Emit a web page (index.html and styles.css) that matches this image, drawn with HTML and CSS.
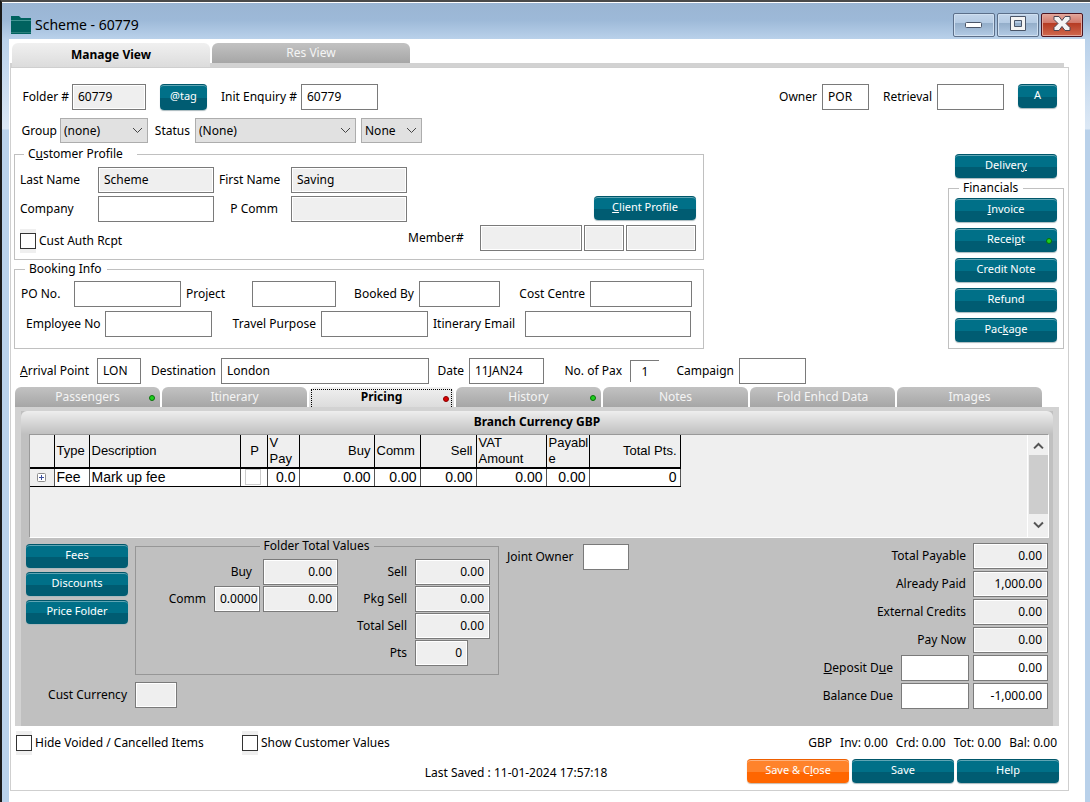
FILE: index.html
```html
<!DOCTYPE html>
<html lang="en">
<head>
    <meta charset="UTF-8">
    <meta name="viewport" content="width=device-width, initial-scale=1.0">
    <title>Scheme - 60779</title>
    <link rel="stylesheet" href="styles.css">
</head>
<body>

<div class="window">
    <header class="titlebar">
        <svg class="folder-icon" width="20" height="18" viewBox="0 0 20 18">
            <path d="M0 0h8l2 2h10v16H0z" fill="#00625f"/>
            <path d="M0 4.500h20" stroke="#3d9490" stroke-width="1"/>
            <path d="M0 16.500h20" stroke="#2b807c" stroke-width="1"/>
        </svg>
        <h1>Scheme - 60779</h1>
        <div class="window-buttons">
            <button type="button" class="win-btn" aria-label="Minimize">
                <svg width="18" height="18" viewBox="0 0 18 18"><rect x=".5" y="7.500" width="16" height="5" rx="1" fill="#fff" stroke="#4a5568"/></svg>
            </button>
            <button type="button" class="win-btn" aria-label="Maximize">
                <svg width="18" height="18" viewBox="0 0 18 18"><path d="M1.500 1.500h15v14h-15z M5.500 5.500v6h7v-6z" fill="#f4f4f4" fill-rule="evenodd" stroke="#4a5568"/></svg>
            </button>
            <button type="button" class="win-btn win-close" aria-label="Close">
                <svg width="18" height="18" viewBox="0 0 18 18"><path d="M1 1.500h5l3 4 3-4h5v3l-4 4 4 4v3h-5l-3-4-3 4H1v-3l4-4-4-4z" fill="#f4f4f4" stroke="#4b4552"/></svg>
            </button>
        </div>
    </header>

    <main class="client">
        <nav class="view-tabs">
            <button type="button" class="tab tab-active">Manage View</button>
            <button type="button" class="tab">Res View</button>
        </nav>

        <div class="panel">
            <div class="row top-row">
                <div class="field f-folder"><label for="folder">Folder #</label><input type="text" id="folder" value="60779" readonly></div>
                <button type="button" class="btn btn-tag">@tag</button>
                <div class="field f-enquiry"><label for="enquiry">Init Enquiry #</label><input type="text" id="enquiry" value="60779"></div>
                <div class="field f-owner"><label for="owner">Owner</label><input type="text" id="owner" value="POR"></div>
                <div class="field f-retrieval"><label for="retrieval">Retrieval</label><input type="text" id="retrieval"></div>
                <button type="button" class="btn btn-a">A</button>
            </div>

            <div class="row status-row">
                <div class="field f-group">
                    <label for="group">Group</label>
                    <span class="select"><select id="group"><option>(none)</option></select><svg width="11" height="7" viewBox="0 0 11 7"><path d="M1 1l4.500 4.500L10 1"/></svg></span>
                </div>
                <div class="field f-status">
                    <label for="status">Status</label>
                    <span class="select"><select id="status"><option>(None)</option></select><svg width="11" height="7" viewBox="0 0 11 7"><path d="M1 1l4.500 4.500L10 1"/></svg></span>
                    <span class="select"><select aria-label="Sub status"><option>None</option></select><svg width="11" height="7" viewBox="0 0 11 7"><path d="M1 1l4.500 4.500L10 1"/></svg></span>
                </div>
            </div>

            <div class="upper">
                <div class="details">
                    <fieldset class="profile">
                        <legend class="wide">C<u>u</u>stomer Profile</legend>
                        <div class="row">
                            <div class="field f-last"><label class="left" for="last">Last Name</label><input type="text" id="last" value="Scheme" readonly></div>
                            <div class="field f-first"><label class="left lead" for="first">First Name</label><input type="text" id="first" value="Saving" readonly></div>
                        </div>
                        <div class="row">
                            <div class="field f-last"><label class="left" for="company">Company</label><input type="text" id="company"></div>
                            <div class="field f-first"><label class="indent" for="pcomm">P Comm</label><input type="text" id="pcomm" readonly></div>
                            <button type="button" class="btn push"><u>C</u>lient Profile</button>
                        </div>
                        <div class="row">
                            <label class="check"><input type="checkbox">Cust Auth Rcpt</label>
                            <div class="field f-member push">
                                <label class="left" for="member">Member#</label>
                                <input type="text" id="member" readonly>
                                <input type="text" aria-label="Member code" readonly>
                                <input type="text" aria-label="Member type" readonly>
                            </div>
                        </div>
                    </fieldset>

                    <fieldset class="booking">
                        <legend>Booking Info</legend>
                        <div class="row">
                            <div class="field f-po"><label class="left" for="po">PO No.</label><input type="text" id="po"></div>
                            <div class="field f-project"><label class="left lead" for="project">Project</label><input type="text" id="project"></div>
                            <div class="field f-booked"><label for="booked">Booked By</label><input type="text" id="booked"></div>
                            <div class="field f-cost"><label for="cost">Cost Centre</label><input type="text" id="cost"></div>
                        </div>
                        <div class="row">
                            <div class="field f-employee"><label class="left lead" for="employee">Employee No</label><input type="text" id="employee"></div>
                            <div class="field f-travel"><label for="travel">Travel Purpose</label><input type="text" id="travel"></div>
                            <div class="field f-email"><label class="left lead" for="email">Itinerary Email</label><input type="text" id="email"></div>
                        </div>
                    </fieldset>
                </div>

                <aside class="side">
                    <button type="button" class="btn">Deliver<u>y</u></button>
                    <fieldset class="financials">
                        <legend>Financials</legend>
                        <button type="button" class="btn"><u>I</u>nvoice</button>
                        <button type="button" class="btn">Recei<u>p</u>t<i class="dot green"></i></button>
                        <button type="button" class="btn">Credit Note</button>
                        <button type="button" class="btn">Refund</button>
                        <button type="button" class="btn">Pac<u>k</u>age</button>
                    </fieldset>
                </aside>
            </div>

            <div class="row trip">
                <div class="field f-arrival"><label class="left" for="arrival"><u>A</u>rrival Point</label><input type="text" id="arrival" value="LON"></div>
                <div class="field f-dest"><label for="dest">Destination</label><input type="text" id="dest" value="London"></div>
                <div class="field f-date"><label for="date">Date</label><input type="text" id="date" value="11JAN24"></div>
                <div class="field f-pax"><label for="pax">No. of Pax</label><input type="text" id="pax" class="pax" value="1"></div>
                <div class="field f-campaign"><label for="campaign">Campaign</label><input type="text" id="campaign"></div>
            </div>

            <nav class="folder-tabs">
                <button type="button" class="tab">Passengers<i class="dot green"></i></button>
                <button type="button" class="tab">Itinerary</button>
                <button type="button" class="tab tab-active focused">Pricing<i class="dot red"></i></button>
                <button type="button" class="tab">History<i class="dot green"></i></button>
                <button type="button" class="tab">Notes</button>
                <button type="button" class="tab">Fold Enhcd Data</button>
                <button type="button" class="tab">Images</button>
            </nav>

            <section class="pricing">
                <div class="pricing-body">
                    <h2>Branch Currency GBP</h2>

                    <div class="grid-box">
                        <div class="grid-area">
                            <table class="grid">
                                <colgroup>
                                    <col class="c-exp"><col class="c-type"><col class="c-desc"><col class="c-p"><col class="c-vpay"><col class="c-buy">
                                    <col class="c-comm"><col class="c-sell"><col class="c-vat"><col class="c-payable"><col class="c-total">
                                </colgroup>
                                <thead>
                                    <tr><th></th><th>Type</th><th>Description</th><th class="mid">P</th><th>V Pay</th><th class="num">Buy</th><th>Comm</th><th class="num">Sell</th><th>VAT Amount</th><th>Payable</th><th class="num">Total Pts.</th></tr>
                                </thead>
                                <tbody>
                                    <tr>
                                        <td class="expander"><button type="button" aria-label="Expand"><svg width="9" height="9" viewBox="0 0 9 9"><rect x=".5" y=".5" width="8" height="8" rx="1" fill="#fff" stroke="#8c8c8c"/><path d="M2 4.500h5M4.500 2v5" stroke="#3c4f9c"/></svg></button></td>
                                        <td>Fee</td><td>Mark up fee</td>
                                        <td class="mid"><input type="checkbox" aria-label="P"></td>
                                        <td class="num">0.0</td><td class="num">0.00</td><td class="num">0.00</td><td class="num">0.00</td><td class="num">0.00</td><td class="num">0.00</td><td class="num">0</td>
                                    </tr>
                                </tbody>
                            </table>
                        </div>
                        <div class="scrollbar">
                            <svg width="11" height="8" viewBox="0 0 11 8"><path d="M1 6.500L5.500 2 10 6.500"/></svg>
                            <div class="thumb"></div>
                            <svg width="11" height="8" viewBox="0 0 11 8"><path d="M1 1.500L5.500 6 10 1.500"/></svg>
                        </div>
                    </div>

                    <div class="values">
                        <div class="values-left">
                            <div class="values-top">
                                <div class="actions">
                                    <button type="button" class="btn">Fees</button>
                                    <button type="button" class="btn">Discounts</button>
                                    <button type="button" class="btn">Price Folder</button>
                                </div>
                                <fieldset class="totals">
                                    <legend>Folder Total Values</legend>
                                    <div class="totals-buy">
                                        <label class="span" for="buy">Buy</label><input type="text" id="buy" value="0.00" readonly>
                                        <label for="comm">Comm</label><input type="text" id="comm" class="rate" value="0.0000" readonly><input type="text" aria-label="Comm value" value="0.00" readonly>
                                    </div>
                                    <div class="totals-sell">
                                        <label for="sell">Sell</label><input type="text" id="sell" value="0.00" readonly>
                                        <label for="pkg">Pkg Sell</label><input type="text" id="pkg" value="0.00" readonly>
                                        <label for="total-sell">Total Sell</label><input type="text" id="total-sell" value="0.00" readonly>
                                        <label for="pts">Pts</label><input type="text" id="pts" class="pts" value="0" readonly>
                                    </div>
                                </fieldset>
                            </div>
                            <div class="field f-currency"><label for="currency">Cust Currency</label><input type="text" id="currency" readonly></div>
                        </div>

                        <div class="field f-joint"><label class="left" for="joint">Joint Owner</label><input type="text" id="joint"></div>

                        <div class="payments">
                            <label class="span" for="payable">Total Payable</label><input type="text" id="payable" value="0.00" readonly>
                            <label class="span" for="paid">Already Paid</label><input type="text" id="paid" value="1,000.00" readonly>
                            <label class="span" for="credits">External Credits</label><input type="text" id="credits" value="0.00" readonly>
                            <label class="span" for="paynow">Pay Now</label><input type="text" id="paynow" value="0.00" readonly>
                            <label for="deposit"><u>D</u>eposit D<u>u</u>e</label><input type="text" id="deposit"><input type="text" aria-label="Deposit amount" value="0.00">
                            <label for="balance">Balance Due</label><input type="text" id="balance"><input type="text" aria-label="Balance amount" value="-1,000.00">
                        </div>
                    </div>
                </div>
            </section>

            <div class="options">
                <label class="check hide-voided"><input type="checkbox">Hide Voided / Cancelled Items</label>
                <label class="check"><input type="checkbox">Show Customer Values</label>
                <div class="summary"><span>GBP</span><span>Inv: 0.00</span><span>Crd: 0.00</span><span>Tot: 0.00</span><span>Bal: 0.00</span></div>
            </div>

            <footer class="footer">
                <p>Last Saved : 11-01-2024 17:57:18</p>
                <button type="button" class="btn btn-orange">Save &amp; C<u>l</u>ose</button>
                <button type="button" class="btn">Save</button>
                <button type="button" class="btn">Help</button>
            </footer>
        </div>
    </main>
</div>

</body>
</html>
```
FILE: styles.css
```css
* {
    box-sizing: border-box;
}

body {
    margin: 0;
    font-family: "Noto Sans", "Open Sans", sans-serif;
    font-size: 12px;
    line-height: 16px;
    color: #000;
    background: #fff;
}

button, input, select {
    font-family: inherit;
    font-size: inherit;
    line-height: inherit;
    color: inherit;
    margin: 0;
}

/* Window frame */
.window {
    display: flex;
    flex-direction: column;
    min-height: 100vh;
    padding: 0 5px 0 7px;
    border-top: 2px solid #4a4a4a;
    border-left: 2px solid #1a1a1a;
    background: linear-gradient(#fff 0, #fff 1px, #9ab5d3 1px, #9db9d8 18px, #b9d1ea 37px, #dce8f5 127px, #b9d1ea 128px);
}

.titlebar {
    display: flex;
    align-items: center;
    height: 37px;
    padding: 8px 2px 0;
}

.titlebar h1 {
    margin: 0 auto 0 4px;
    font-size: 14px;
    font-weight: normal;
    line-height: 20px;
}

.window-buttons {
    display: flex;
    gap: 2px;
}

.win-btn {
    display: flex;
    align-items: center;
    justify-content: center;
    width: 42px;
    height: 24px;
    padding: 0 0 2px;
    border: 1px solid #5c6f8a;
    border-radius: 2px;
    background: linear-gradient(#c3d5ea 0, #b4cae3 40%, #93adc9 41%, #b3cbe5 100%);
    box-shadow: inset 0 0 0 1px #cfdff0;
}

.win-close {
    border-color: #4d1420;
    background: linear-gradient(#e3a69b 0, #d2796b 40%, #b53a22 41%, #d0694f 100%);
    box-shadow: inset 0 0 0 1px #e2a79c;
}

.client {
    flex: 1;
    padding: 4px 16px 10px 1px;
    background: #fff;
}

/* Tabs */
.tab {
    position: relative;
    height: 20px;
    padding: 0;
    border: 0;
    border-radius: 6px 6px 0 0;
    color: #f4f4f4;
    background: linear-gradient(#c2c2c2, #a6a6a6);
}

.tab-active {
    color: #000;
    font-weight: bold;
    background: linear-gradient(#f0f0f0, #dcdcdc);
}

.view-tabs {
    display: flex;
    gap: 2px;
    margin-right: 5px;
    padding-left: 2px;
    border-bottom: 4px solid #d2d2d2;
}

.view-tabs .tab {
    flex: 0 1 198px;
}

.view-tabs .tab-active {
    height: 24px;
    margin-bottom: -4px;
}

.folder-tabs {
    display: flex;
    gap: 2px;
    margin: 3px 19px 0 1px;
}

.folder-tabs .tab {
    flex: 0 1 145px;
}

.focused::before {
    content: "";
    position: absolute;
    inset: 2px 2px 0;
    border: 1px dotted #000;
    border-bottom: 0;
}

.dot {
    position: absolute;
    right: 5px;
    top: 8px;
    width: 6px;
    height: 6px;
    border: 1px solid #087008;
    border-radius: 50%;
    background: #1fd01f;
}

.dot.red {
    top: 9px;
    border-color: #8a0000;
    background: #d80000;
}

/* Form pieces */
.panel {
    padding: 16px 4px 7px 3px;
    border: 1px solid #cfcfcf;
}

.row {
    display: flex;
    align-items: center;
}

.push {
    margin-left: auto;
}

.field {
    display: grid;
    align-items: center;
}

label {
    white-space: nowrap;
}

.field label,
.totals label,
.payments label {
    padding-right: 5px;
    text-align: right;
}

.field .left {
    padding-right: 0;
    text-align: left;
}

.field .lead {
    padding-left: 5px;
}

.field .indent {
    padding-right: 13px;
}

input[type="text"] {
    min-width: 0;
    width: 100%;
    height: 26px;
    padding: 0 5px 2px;
    border: 1px solid #7a7a7a;
    background: #fff;
}

input[readonly] {
    background: #efefef;
    box-shadow: inset 0 0 0 1px #fff;
}

.select {
    position: relative;
    display: block;
}

.select select {
    appearance: none;
    width: 100%;
    height: 25px;
    padding: 0 20px 0 3px;
    border: 1px solid #adadad;
    border-radius: 0;
    background: #e1e1e1;
}

.select svg {
    position: absolute;
    right: 5px;
    top: 9px;
    fill: none;
    stroke: #444;
    pointer-events: none;
}

.check {
    display: flex;
    align-items: center;
    gap: 3px;
}

.check input {
    appearance: none;
    width: 16px;
    height: 16px;
    border: 1px solid #333;
    background: #fff;
    box-shadow: 0 -4px #efefef, 0 4px #efefef;
}

.btn {
    position: relative;
    width: 102px;
    height: 24px;
    padding: 0 0 4px;
    border: 0;
    border-top: 1px solid #00566a;
    border-radius: 4px;
    color: #fff;
    font-size: 11px;
    background: linear-gradient(#007088 0, #007088 50%, #005c72 51%, #005c72 100%);
    box-shadow: inset 0 1px #5fa5b4, 0 1px 1px #a9b9bd;
}

.btn .dot {
    top: 9px;
}

.btn-orange {
    border-top-color: #ee5f00;
    background: linear-gradient(#ff832b 0, #ff832b 50%, #ff6600 51%, #ff6600 100%);
    box-shadow: inset 0 1px #ffb27c, 0 1px 1px #c9b9a9;
}

.btn-tag {
    width: 47px;
    height: 26px;
}

.btn-a {
    width: 39px;
    align-self: flex-start;
}

fieldset {
    min-width: 0;
    margin: 0;
    padding: 0;
    border: 1px solid #c0c0c0;
}

legend {
    margin-left: 4px;
    padding: 0 5px 0 4px;
    height: 16px;
}

legend.wide {
    padding-right: 14px;
}

/* Folder header rows */
.top-row {
    gap: 14px;
    padding: 0 7px;
}

.top-row .f-owner {
    margin-left: auto;
}

.status-row {
    gap: 5px;
    margin-top: 8px;
    padding-left: 6px;
}

.f-folder { grid-template-columns: 51px 74px; }
.f-enquiry { grid-template-columns: 80px 77px; }
.f-owner { grid-template-columns: 43px 47px; }
.f-retrieval { grid-template-columns: 54px 67px; }
.f-group { grid-template-columns: 40px 88px; }
.f-status { grid-template-columns: 42px 161px 66px; }

.f-folder label,
.f-group label {
    padding-right: 3px;
}

.f-status .select + .select {
    margin-left: 5px;
}

.upper {
    display: flex;
    justify-content: space-between;
    margin-top: 3px;
}

.details {
    flex: 0 1 690px;
}

.profile {
    display: flex;
    flex-direction: column;
    padding: 5px 7px 8px 5px;
}

.profile .row + .row {
    margin-top: 3px;
}

.profile .btn {
    align-self: flex-start;
}

.profile .check {
    padding-top: 5px;
}

.f-last { grid-template-columns: 78px 116px; }
.f-first { grid-template-columns: 77px 116px; }

.f-member {
    grid-template-columns: 70px 102px 40px 70px;
    column-gap: 2px;
}

.booking {
    margin-top: 1px;
    padding: 4px 10px 11px 6px;
}

.booking .row + .row {
    margin-top: 4px;
}

.f-po { grid-template-columns: 53px 107px; }
.f-project { grid-template-columns: 71px 84px; }
.f-booked { grid-template-columns: 83px 81px; }
.f-cost { grid-template-columns: 90px 102px; }
.f-employee { grid-template-columns: 84px 107px; }
.f-travel { grid-template-columns: 109px 107px; }
.f-email { grid-template-columns: 97px 166px; }

.side {
    display: flex;
    flex-direction: column;
    align-items: center;
    gap: 2px;
    width: 116px;
    padding-top: 8px;
}

.financials {
    width: 100%;
    padding: 2px 6px 6px;
}

.financials .btn + .btn {
    margin-top: 6px;
}

.financials .btn {
    display: block;
}

.trip {
    margin-top: 9px;
    padding-left: 6px;
}

.f-arrival { grid-template-columns: 77px 44px; }
.f-dest { grid-template-columns: 80px 208px; }
.f-date { grid-template-columns: 40px 75px; }
.f-pax { grid-template-columns: 86px 29px; }
.f-campaign { grid-template-columns: 80px 67px; }

.f-pax label {
    padding-right: 8px;
}

.trip .pax {
    height: 22px;
    padding: 0;
    border-width: 1px 0 0 1px;
    text-align: center;
}

/* Pricing tab */
.pricing {
    margin: 0 5px 0 1px;
    padding: 4px 6px 0;
    background: #d2d2d2;
}

.pricing-body {
    background: #c0c0c0;
}

.pricing h2 {
    margin: 0;
    padding-bottom: 2px;
    border-radius: 6px 6px 0 0;
    font-size: 12px;
    line-height: 21px;
    text-align: center;
    background: linear-gradient(#eee, #c0c0c0);
}

.grid-box {
    display: flex;
    height: 104px;
    margin: 0 4px 0 8px;
    border: 1px solid #fff;
    border-top-color: #999;
    border-left-color: #999;
    background: #efefef;
}

.grid-area {
    flex: 1;
    overflow: hidden;
}

.grid {
    width: 650px;
    table-layout: fixed;
    border-collapse: collapse;
    font-family: "Liberation Sans", Arial, sans-serif;
    font-size: 14px;
}

.c-exp { width: 24px; }
.c-type { width: 35px; }
.c-desc { width: 151px; }
.c-p { width: 27px; }
.c-vpay { width: 32px; }
.c-buy { width: 75px; }
.c-comm { width: 46px; }
.c-sell { width: 56px; }
.c-vat { width: 70px; }
.c-payable { width: 43px; }
.c-total { width: 91px; }

.grid th {
    height: 33px;
    padding: 0 0 0 2px;
    border-right: 1px solid #000;
    border-bottom: 2px solid #000;
    font-size: 13px;
    font-weight: normal;
    text-align: left;
    overflow-wrap: anywhere;
}

.grid td {
    height: 18px;
    padding: 0 3px 0 2px;
    border-right: 1px solid #555;
    border-bottom: 1px solid #000;
    background: #fff;
}

.grid .num {
    padding-right: 3px;
    text-align: right;
}

.grid .mid {
    text-align: center;
}

.grid .expander {
    padding: 0;
    text-align: center;
    background: #efefef;
}

.expander button {
    display: block;
    margin: 0 auto;
    padding: 0;
    border: 0;
    line-height: 0;
    background: none;
}

.grid input {
    appearance: none;
    display: block;
    width: 16px;
    height: 16px;
    margin: 0 auto;
    border: 1px solid #ccc;
}

.scrollbar {
    display: flex;
    flex-direction: column;
    align-items: center;
    width: 21px;
    padding: 7px 0 8px;
    border-left: 1px solid #fff;
}

.scrollbar svg {
    fill: none;
    stroke: #555;
    stroke-width: 2;
}

.thumb {
    width: 19px;
    height: 60px;
    margin: 5px 0 7px;
    background: #cdcdcd;
}

.values {
    display: flex;
    align-items: flex-start;
    padding: 5px 5px 17px;
}

.values-top {
    display: flex;
    gap: 7px;
}

.actions {
    display: flex;
    flex-direction: column;
    gap: 4px;
    padding-top: 1px;
}

.totals {
    display: flex;
    justify-content: space-between;
    width: 364px;
    margin-top: -5px;
    padding: 5px 8px 8px;
    border-color: #969696;
}

.totals legend {
    margin: 0 auto;
}

.totals-buy,
.totals-sell,
.payments {
    display: grid;
    align-items: center;
    align-content: start;
    row-gap: 1px;
}

.totals-buy {
    grid-template-columns: 48px 46px 75px;
    margin-left: 22px;
}

.totals-buy .span {
    grid-column: span 2;
}

.totals-buy > :last-child,
.totals-buy .span + input {
    margin-left: 3px;
    width: 75px;
}

.totals-sell {
    grid-template-columns: 62px 75px;
}

.totals label {
    padding-right: 8px;
}

.totals input,
.payments input {
    text-align: right;
}

.totals .rate {
    padding-right: 0;
    text-align: left;
}

.totals .pts {
    width: 53px;
}

.f-currency {
    grid-template-columns: 109px 42px;
    margin-top: 7px;
}

.f-currency label {
    padding-right: 8px;
}

.f-joint {
    grid-template-columns: 76px 46px;
    margin: 1px auto 0 8px;
}

.payments {
    grid-template-columns: 80px 68px 79px;
    row-gap: 2px;
}

.payments label {
    padding-right: 8px;
}

.payments .span {
    grid-column: span 2;
    padding-right: 3px;
}

.payments label + input + input,
.payments .span + input {
    width: 75px;
    margin-left: 4px;
}

/* Bottom of the form */
.options {
    display: flex;
    align-items: center;
    margin-top: 9px;
    padding: 0 7px 0 2px;
}

.hide-voided {
    width: 226px;
}

.summary {
    display: flex;
    gap: 8px;
    margin-left: auto;
}

.footer {
    display: flex;
    align-items: center;
    gap: 3px;
    margin-top: 8px;
    padding-right: 5px;
}

.footer p {
    flex: 1;
    margin: 4px 0 0;
    padding-left: 274px;
    text-align: center;
}
```
